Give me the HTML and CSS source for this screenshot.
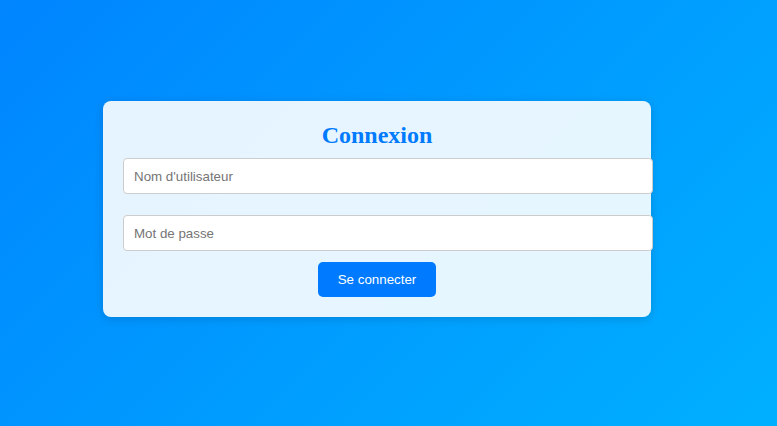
FILE: index.html
```html
<!DOCTYPE html>
<html lang="fr">
<head>
<meta charset="utf-8">
<title>Connexion</title>
<link rel="stylesheet" href="styles.css">
</head>
<body>
<main class="page">
  <form class="card">
    <h2 class="title">Connexion</h2>
    <input class="field" type="text" placeholder="Nom d'utilisateur">
    <input class="field" type="password" placeholder="Mot de passe">
    <div class="actions">
      <button class="btn" type="button">Se connecter</button>
    </div>
  </form>
</main>
</body>
</html>
```
FILE: styles.css
```css
html, body {
  margin: 0;
  height: 100%;
}
body {
  background: linear-gradient(135deg, #0085ff 0%, #00b0ff 100%);
  font-family: "Liberation Sans", Arial, sans-serif;
  overflow: hidden;
}
.page {
  padding: 101px 0 0 103px;
}
.card {
  width: 508px;
  padding: 20px;
  background: rgba(255, 255, 255, 0.9);
  border-radius: 8px;
  box-shadow: 0 2px 10px rgba(0, 0, 0, 0.15);
  display: flex;
  flex-direction: column;
}
.title {
  margin: 0 0 9px;
  font-family: "Liberation Serif", "Times New Roman", serif;
  font-size: 24px;
  font-weight: bold;
  color: #007bff;
  text-align: center;
  line-height: 28px;
}
.field {
  width: 100%;
  height: 14px;
  padding: 10px;
  margin: 0 0 21px;
  border: 1px solid #ccc;
  border-radius: 4px;
  font-family: "Liberation Sans", Arial, sans-serif;
  font-size: 13.333px;
  background: #fff;
  color: #333;
  box-sizing: content-box;
  outline: none;
}
.field:last-of-type {
  margin-bottom: 11px;
}
.field::placeholder {
  color: #757575;
}
.actions {
  display: flex;
  justify-content: center;
}
.btn {
  padding: 10px 20px;
  border: none;
  border-radius: 5px;
  background: #007bff;
  color: #fff;
  font-family: "Liberation Sans", Arial, sans-serif;
  font-size: 13.333px;
  line-height: 15px;
  cursor: pointer;
}
```
